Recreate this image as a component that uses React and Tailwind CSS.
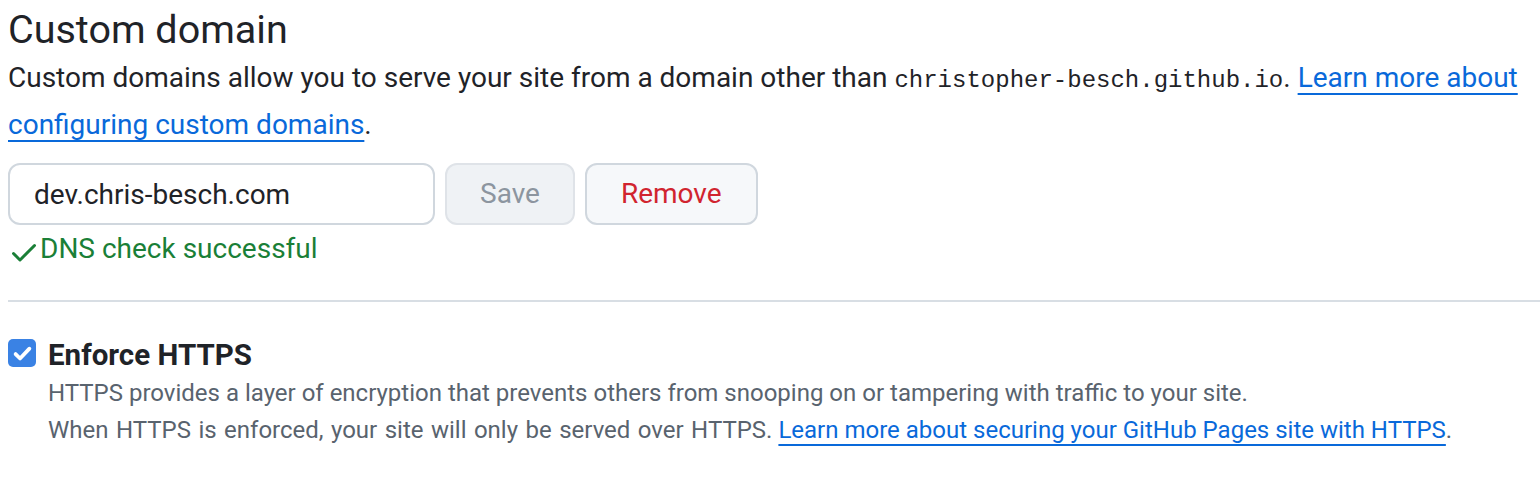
import { useState } from "react";

export default function App() {
  const [domain, setDomain] = useState("dev.chris-besch.com");
  const [enforce, setEnforce] = useState(true);

  return (
    <div className="min-h-screen bg-white font-['Roboto',sans-serif] text-[#1f2328]">
      <div className="pl-2">
        <h2 className="text-[39.5px] leading-[53px] pt-[3px] font-normal">Custom domain</h2>
        <p className="text-[28px] leading-[44px] pr-4">
          Custom domains allow you to serve your site from a domain other than{" "}
          <code className="font-['Liberation_Mono',monospace] text-[24px]">christopher-besch.github.io</code>.{" "}
          <a href="#" className="text-[#0969da] underline decoration-2 underline-offset-[6px]">
            Learn more about configuring custom domains
          </a>
          .
        </p>

        <form className="flex items-center gap-[10px] mt-[16px]" onSubmit={(e) => e.preventDefault()}>
          <input
            type="text"
            value={domain}
            onChange={(e) => setDomain(e.target.value)}
            className="w-[427px] h-[62px] px-[24px] text-[28px] border-2 border-[#d0d7de] rounded-xl outline-none"
          />
          <button
            type="submit"
            disabled
            className="h-[62px] px-[33px] text-[28px] text-[#8c959f] bg-[#eff2f5] border-2 border-[#dfe3e8] rounded-xl"
          >
            Save
          </button>
          <button
            type="button"
            className="h-[62px] px-[34px] text-[28px] text-[#d1242f] bg-[#f6f8fa] border-2 border-[#d0d7de] rounded-xl"
          >
            Remove
          </button>
        </form>

        <div className="flex items-center text-[28px] leading-[40px] text-[#1a7f37] mt-[4px]">
          <svg viewBox="0 0 16 16" className="w-[32px] h-[32px] mt-[6px]" fill="currentColor">
            <path d="M13.78 4.22a.75.75 0 0 1 0 1.06l-7.25 7.25a.75.75 0 0 1-1.06 0L2.22 9.28a.751.751 0 0 1 .018-1.042.751.751 0 0 1 1.042-.018L6 10.94l6.72-6.72a.75.75 0 0 1 1.06 0Z" />
          </svg>
          <span>DNS check successful</span>
        </div>
      </div>

      <div className="ml-2 mt-[31px] h-[2px] bg-[#d8dee4]" />

      <div className="pl-2 mt-[38px] flex items-start gap-[12px]">
        <button
          type="button"
          onClick={() => setEnforce(!enforce)}
          className={
            enforce
              ? "-mt-[1px] w-[28px] h-[28px] rounded-[5px] bg-[#3a82e4] flex items-center justify-center shrink-0"
              : "-mt-[1px] w-[28px] h-[28px] rounded-[5px] border-2 border-[#767676] bg-white shrink-0"
          }
        >
          {enforce && (
            <svg viewBox="0 0 16 16" className="w-[23px] h-[23px]" fill="none" stroke="white" strokeWidth="2.6" strokeLinecap="round" strokeLinejoin="round">
              <path d="M3.2 8.4l3.1 3.1L12.8 4.6" />
            </svg>
          )}
        </button>
        <div>
          <div className="text-[29.5px] leading-[30px] font-bold">Enforce HTTPS</div>
          <p className="text-[24px] leading-[37px] text-[#59636e] mt-[5px]">
            HTTPS provides a layer of encryption that prevents others from snooping on or tampering with traffic to your site.
            <br />
            <span className="[word-spacing:1.5px]">When HTTPS is enforced, your site will only be served over HTTPS.</span>{" "}
            <a href="#" className="text-[#0969da] underline decoration-2 underline-offset-[6px]">
              Learn more about securing your GitHub Pages site with HTTPS
            </a>
            .
          </p>
        </div>
      </div>
    </div>
  );
}
